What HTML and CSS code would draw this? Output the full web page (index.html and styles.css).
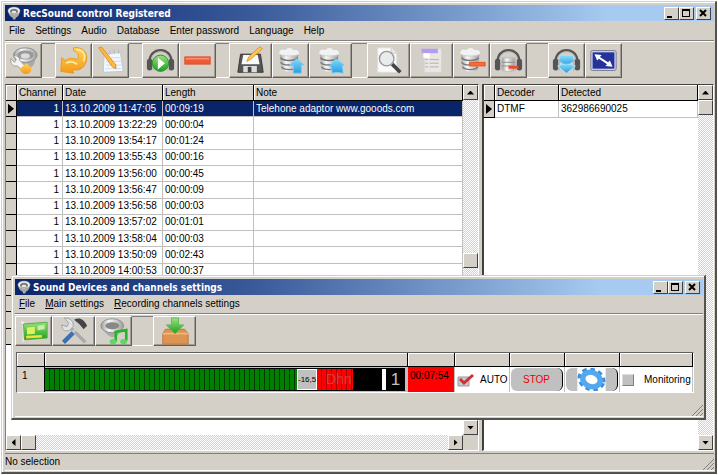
FILE: index.html
```html
<!DOCTYPE html>
<html lang="en">
<head>
    <meta charset="UTF-8">
    <title>RecSound control</title>
    <link rel="stylesheet" href="styles.css">
</head>
<body>
    <svg width="0" height="0" class="defs">
        <defs>
            <linearGradient id="silver" x1="0" y1="0" x2="1" y2="0">
                <stop offset="0" stop-color="#9b9b9b"/>
                <stop offset=".35" stop-color="#f8f8f8"/>
                <stop offset="1" stop-color="#9e9e9e"/>
            </linearGradient>
            <linearGradient id="gold" x1="0" y1="0" x2="0" y2="1">
                <stop offset="0" stop-color="#ffd45a"/>
                <stop offset="1" stop-color="#f39a18"/>
            </linearGradient>
            <linearGradient id="leaf" x1="0" y1="0" x2="0" y2="1">
                <stop offset="0" stop-color="#9ae27c"/>
                <stop offset="1" stop-color="#1e9f1e"/>
            </linearGradient>
            <linearGradient id="sky" x1="0" y1="0" x2="0" y2="1">
                <stop offset="0" stop-color="#7fdcfb"/>
                <stop offset="1" stop-color="#2b9ae0"/>
            </linearGradient>
            <symbol id="speaker" viewBox="0 0 32 32">
                <path d="M3 12c0 7 4 12 10 15l1 4h5l1-4c6-3 9-8 9-15z" fill="#aaa"/>
                <ellipse cx="16" cy="11" rx="14" ry="9" fill="#f0f0f0" stroke="#888"/>
                <ellipse cx="16" cy="12" rx="9" ry="6" fill="#7a7a7a"/>
                <ellipse cx="16" cy="14" rx="5" ry="3" fill="#e8e8e8"/>
            </symbol>
            <symbol id="base" viewBox="0 0 32 32">
                <path d="M4 7l2 18c1 4 16 4 17 0l2-18z" fill="url(#silver)"/>
                <path d="M5 13c3 4 16 4 19 0M5 18c3 4 15 4 18 0M6 23c3 4 14 4 17 0" fill="none" stroke="#777" stroke-width="1.5"/>
                <path d="M3 8c0-4 4-6 7-4 3-3 7-3 9 0 4-1 7 1 7 4-1 4-22 4-23 0z" fill="#f2f2f2" stroke="#ccc"/>
            </symbol>
            <symbol id="phones" viewBox="0 0 32 32">
                <path d="M4 18C3 0 29 0 28 18" fill="none" stroke="#555" stroke-width="2.5"/>
                <path d="M6 16C6 3 26 3 26 16" fill="none" stroke="#aaa"/>
                <rect x="1" y="14" width="6" height="13" rx="3" fill="#555"/>
                <rect x="25" y="14" width="6" height="13" rx="3" fill="#555"/>
                <path d="M8 15v12M24 15v12" stroke="#bbb" stroke-width="2"/>
            </symbol>
        </defs>
    </svg>

    <div class="window main">
        <div class="titlebar">
            <svg class="logo"><use href="#speaker"/></svg>
            <span class="caption">RecSound control Registered</span>
            <button class="sys" aria-label="Minimize"><i class="min"></i></button>
            <button class="sys" aria-label="Maximize"><i class="max"></i></button>
            <button class="sys close" aria-label="Close"><svg viewBox="0 0 8 8"><path d="M1 1l6 6M7 1L1 7"/></svg></button>
        </div>
        <div class="menu">
            <button>File</button>
            <button>Settings</button>
            <button>Audio</button>
            <button>Database</button>
            <button>Enter password</button>
            <button>Language</button>
            <button>Help</button>
        </div>
        <div class="toolbar">
            <button class="tool" aria-label="Sound devices">
                <svg viewBox="0 0 32 32"><path d="M6 12c1 8 7 14 13 15 6-2 10-7 10-14z" fill="#aaa"/><ellipse cx="18" cy="10" rx="13" ry="8" fill="url(#silver)" stroke="#888"/><ellipse cx="18" cy="10" rx="9" ry="5" fill="#999"/><ellipse cx="18" cy="11" rx="5" ry="3" fill="#ddd"/><path d="M2 14c-1 6 3 9 7 8l5 4 4-4-6-6c0-4-4-6-7-5l3 4-2 3z" fill="#f2f2f2" stroke="#999"/><path d="M12 25l7-6 5 4c2 4-1 8-5 8-4 0-6-3-7-6z" fill="url(#gold)"/></svg>
            </button>
            <span class="sep"></span>
            <button class="tool" aria-label="Refresh">
                <svg viewBox="0 0 32 32"><path d="M16 2c10-2 17 6 14 15-2 8-9 11-15 9l1 4-14-2 1-15 4 3c6-4 10-2 13-1 3-4 1-8-4-10z" fill="url(#gold)" stroke="#eb961a"/><path d="M19 4c8 0 11 6 8 13M8 19c4-3 9-1 12 1" fill="none" stroke="#ffe9a0" stroke-width="2"/></svg>
            </button>
            <button class="tool" aria-label="Notes">
                <svg viewBox="0 0 32 32"><path d="M9 9l18-2 3 21-22 1z" fill="#f4f8fb" stroke="#b4c8d8"/><path d="M11 13h16M11 17h17M11 21h17M10 25h18" stroke="#c5dcec"/><path d="M15 5v5M20 4v5M25 4v5" stroke="#bbb"/><path d="M3 2l3-1 16 20v4l-4-2z" fill="#ffb93e" stroke="#d98d20"/></svg>
            </button>
            <span class="sep"></span>
            <button class="tool" aria-label="Listen">
                <svg viewBox="0 0 32 32"><use href="#phones"/><circle cx="16" cy="19" r="9" fill="url(#leaf)" stroke="#239023"/><path d="M13 13l8 6-8 7z" fill="#fff"/></svg>
            </button>
            <button class="tool" aria-label="Remove">
                <svg viewBox="0 0 32 32"><rect x="2" y="12" width="28" height="8" fill="#ee5a35" stroke="#d8502c"/><path d="M3 14h26" stroke="#ff8b6c" stroke-width="2"/></svg>
            </button>
            <span class="sep"></span>
            <button class="tool wide" aria-label="Save">
                <svg viewBox="0 0 32 32"><path d="M5 9h22l3 20H2z" fill="#555" stroke="#333"/><path d="M8 10h16l2 10H6z" fill="#fafafa"/><rect x="8" y="22" width="15" height="7" fill="#ddd"/><rect x="13" y="23" width="4" height="6" fill="#444"/><path d="M12 17l2-5L26 1l3 2-12 11z" fill="#ffc84c" stroke="#d8922c"/></svg>
            </button>
            <button class="tool" aria-label="Export database">
                <svg viewBox="0 0 32 32"><use href="#base"/><path d="M23 14l8 7h-3v9h-9v-9h-4z" fill="url(#sky)" stroke="#7cd0f2"/></svg>
            </button>
            <button class="tool wide" aria-label="Import database">
                <svg viewBox="0 0 32 32"><use href="#base"/><path d="M22 14l9 7-2 1 1 8-7-1-5 1-1-6-2-2z" fill="url(#sky)" stroke="#7cd0f2"/></svg>
            </button>
            <span class="sep mid"></span>
            <button class="tool wide" aria-label="Search">
                <svg viewBox="0 0 32 32"><path d="M4 2h15l6 6v21H4z" fill="#fafafa" stroke="#ddd"/><path d="M19 2v6h6" fill="#e8e8e8" stroke="#ccc"/><path d="M20 20l9 9" stroke="#444" stroke-width="4"/><circle cx="14" cy="14" r="8" fill="#e4e8ea" fill-opacity=".8" stroke="#999" stroke-width="1.5"/></svg>
            </button>
            <button class="tool wide" aria-label="Report">
                <svg viewBox="0 0 32 32"><rect x="8" y="3" width="19" height="26" fill="#e9e7e4" stroke="#d8d5d0"/><path d="M5 3h18v5H5z" fill="#b49cee"/><path d="M7 8h7v5H7z" fill="#fff"/><path d="M9 15h3M14 15h10M9 19h3M14 19h10M9 23h3M14 23h10" stroke="#aaa"/></svg>
            </button>
            <button class="tool" aria-label="Delete from database">
                <svg viewBox="0 0 32 32"><use href="#base"/><rect x="14" y="18" width="17" height="4" fill="#f86a38" stroke="#e9501a"/></svg>
            </button>
            <button class="tool" aria-label="Stop listening">
                <svg viewBox="0 0 32 32"><use href="#phones"/><path d="M9 13h14v13c-2 3-12 3-14 0z" fill="url(#silver)" stroke="#bbb"/><path d="M9 18h14M9 22h14" stroke="#888"/><rect x="16" y="22" width="11" height="3" fill="#ee4a28"/></svg>
            </button>
            <span class="sep far"></span>
            <button class="tool" aria-label="Download audio">
                <svg viewBox="0 0 32 32"><use href="#phones"/><path d="M9 11h14v4h3l-10 7-10-7h3z" fill="url(#sky)"/><path d="M9 20h14v2h3l-10 8-10-8h3z" fill="url(#sky)" stroke="#c9f0ff" stroke-width=".6"/></svg>
            </button>
            <button class="tool" aria-label="Resize">
                <svg viewBox="0 0 32 32"><rect x="2" y="5" width="28" height="22" rx="2" fill="#c9d0ea" stroke="#778"/><rect x="4" y="7" width="24" height="18" fill="#24329a"/><path d="M6 9l8 1-2 2 9 6 2-2 3 7-8-1 2-2-9-6-2 2z" fill="#fff"/></svg>
            </button>
        </div>

        <div class="panes">
            <div class="pane left">
                <div class="view">
                    <table class="grid">
                        <colgroup><col class="c-mark"><col class="c-chan"><col class="c-date"><col class="c-len"><col></colgroup>
                        <thead>
                            <tr><th></th><th>Channel</th><th>Date</th><th>Length</th><th>Note</th></tr>
                        </thead>
                        <tbody>
                            <tr class="selected"><td><i class="mark"></i></td><td>1</td><td>13.10.2009 11:47:05</td><td>00:09:19</td><td>Telehone adaptor www.gooods.com</td></tr>
                            <tr><td></td><td>1</td><td>13.10.2009 13:22:29</td><td>00:00:04</td><td></td></tr>
                            <tr><td></td><td>1</td><td>13.10.2009 13:54:17</td><td>00:01:24</td><td></td></tr>
                            <tr><td></td><td>1</td><td>13.10.2009 13:55:43</td><td>00:00:16</td><td></td></tr>
                            <tr><td></td><td>1</td><td>13.10.2009 13:56:00</td><td>00:00:45</td><td></td></tr>
                            <tr><td></td><td>1</td><td>13.10.2009 13:56:47</td><td>00:00:09</td><td></td></tr>
                            <tr><td></td><td>1</td><td>13.10.2009 13:56:58</td><td>00:00:03</td><td></td></tr>
                            <tr><td></td><td>1</td><td>13.10.2009 13:57:02</td><td>00:01:01</td><td></td></tr>
                            <tr><td></td><td>1</td><td>13.10.2009 13:58:04</td><td>00:00:03</td><td></td></tr>
                            <tr><td></td><td>1</td><td>13.10.2009 13:50:09</td><td>00:02:43</td><td></td></tr>
                            <tr><td></td><td>1</td><td>13.10.2009 14:00:53</td><td>00:00:37</td><td></td></tr>
                            <tr><td></td><td></td><td></td><td></td><td></td></tr>
                            <tr><td></td><td></td><td></td><td></td><td></td></tr>
                            <tr><td></td><td></td><td></td><td></td><td></td></tr>
                            <tr><td></td><td></td><td></td><td></td><td></td></tr>
                        </tbody>
                    </table>
                    <div class="vscroll">
                        <button class="arrow" aria-label="Scroll up"><i class="up"></i></button>
                        <span class="track"></span>
                        <span class="thumb"></span>
                        <span class="track"></span>
                        <button class="arrow" aria-label="Scroll down"><i class="down"></i></button>
                    </div>
                </div>
                <div class="hscroll">
                    <button class="arrow" aria-label="Scroll left"><i class="back"></i></button>
                    <span class="thumb"></span>
                    <span class="track"></span>
                    <button class="arrow" aria-label="Scroll right"><i class="forth"></i></button>
                    <span class="corner"></span>
                </div>
            </div>
            <div class="pane right">
                <div class="view">
                    <table class="grid codes">
                        <colgroup><col class="c-mark"><col class="c-code"><col></colgroup>
                        <thead>
                            <tr><th></th><th>Decoder</th><th>Detected</th></tr>
                        </thead>
                        <tbody>
                            <tr><td><i class="mark"></i></td><td>DTMF</td><td>362986690025</td></tr>
                        </tbody>
                    </table>
                    <div class="vscroll">
                        <button class="arrow" aria-label="Scroll up"><i class="up"></i></button>
                        <span class="thumb"></span>
                        <span class="track"></span>
                        <button class="arrow" aria-label="Scroll down"><i class="down"></i></button>
                    </div>
                </div>
            </div>
        </div>
        <div class="status">No selection <svg class="grip" viewBox="0 0 12 12"><path d="M1 12L12 1M5 12l7-7M9 12l3-3"/></svg></div>
    </div>

    <div class="window child">
        <div class="titlebar">
            <svg class="logo"><use href="#speaker"/></svg>
            <span class="caption">Sound Devices and channels settings</span>
            <button class="sys" aria-label="Minimize"><i class="min"></i></button>
            <button class="sys" aria-label="Maximize"><i class="max"></i></button>
            <button class="sys close" aria-label="Close"><svg viewBox="0 0 8 8"><path d="M1 1l6 6M7 1L1 7"/></svg></button>
        </div>
        <div class="menu">
            <button><u>F</u>ile</button>
            <button><u>M</u>ain settings</button>
            <button><u>R</u>ecording channels settings</button>
        </div>
        <div class="toolbar">
            <button class="tool" aria-label="Sound card">
                <svg viewBox="0 0 32 32"><path d="M1 6h3v22" fill="none" stroke="#eee" stroke-width="2"/><path d="M4 8l27-2v18l-26 2z" fill="url(#leaf)" stroke="#4aaa3a"/><path d="M8 12l9-1v8l-9 1z" fill="#dff25a"/><path d="M20 10l8-1v5l-8 1z" fill="#c9f0a0"/><path d="M7 23l18-1" stroke="#f0e040" stroke-width="3"/></svg>
            </button>
            <button class="tool wide" aria-label="Tools">
                <svg viewBox="0 0 32 32"><path d="M13 13l16 16" stroke="#aaa" stroke-width="4"/><path d="M5 1l5 6-2 4-6-2c0 7 5 8 9 6l4-4c1-6-3-10-10-10z" fill="#e0e4e8" stroke="#999"/><path d="M24 8L13 19" stroke="#ccc" stroke-width="3"/><path d="M15 18L4 29" stroke="#3d6fb4" stroke-width="5"/><path d="M16 3c6-3 11-1 15 7l-4 4-5-6z" fill="#444"/></svg>
            </button>
            <button class="tool" aria-label="Audio source">
                <svg viewBox="0 0 32 32"><path d="M4 13c2 7 8 10 11 10s8-3 9-9z" fill="#aaa"/><ellipse cx="14" cy="10" rx="13" ry="8" fill="url(#silver)" stroke="#888"/><ellipse cx="14" cy="10" rx="8" ry="4" fill="#888"/><path d="M18 28V17l12-2v12" fill="none" stroke="#28b428" stroke-width="3"/><ellipse cx="15" cy="28" rx="4" ry="3" fill="#5fd85f"/><ellipse cx="27" cy="28" rx="4" ry="3" fill="#5fd85f"/></svg>
            </button>
            <span class="sep far"></span>
            <button class="tool wide" aria-label="Install">
                <svg viewBox="0 0 32 32"><path d="M5 14h22l4 5v12H2V19z" fill="#dc9450" stroke="#b8743c"/><path d="M2 19h29" stroke="#f0b880" stroke-width="2"/><path d="M12 1h8v8h6L16 19 6 9h6z" fill="url(#leaf)" stroke="#5b5"/></svg>
            </button>
        </div>
        <table class="channels">
            <colgroup><col class="k-num"><col><col class="k-time"><col class="k-box"><col class="k-box"><col class="k-box"><col class="k-mon"></colgroup>
            <thead>
                <tr><th></th><th></th><th></th><th></th><th></th><th></th><th></th></tr>
            </thead>
            <tbody>
                <tr>
                    <td class="num">1</td>
                    <td class="meter">
                        <div class="level">
                            <span class="green"></span>
                            <span class="knob">-16,5</span>
                            <span class="red">Dhn</span>
                            <span class="black"></span>
                            <span class="white"></span>
                            <span class="chan">1</span>
                        </div>
                    </td>
                    <td class="time">00:07:54</td>
                    <td><label class="check"><input type="checkbox" class="auto" checked><svg viewBox="0 0 18 14"><path d="M1 4h11v9H1z" fill="#c4c8d0" stroke="#999"/><path d="M3 6l4 4 9-8" fill="none" stroke="#d23030" stroke-width="3"/></svg>AUTO</label></td>
                    <td><button class="pill stop">STOP</button></td>
                    <td><button class="pill gear" aria-label="Channel settings">
                        <svg viewBox="0 0 32 26"><rect width="32" height="26" fill="#fff"/><g transform="rotate(18 16 13)"><ellipse cx="16" cy="13" rx="14" ry="11" fill="none" stroke="#3a8edc" stroke-width="4" stroke-dasharray="5 4"/><ellipse cx="16" cy="13" rx="10" ry="8" fill="#fff" stroke="#53a9f0" stroke-width="6"/></g></svg>
                    </button></td>
                    <td><label class="check mon"><input type="checkbox">Monitoring</label></td>
                </tr>
            </tbody>
        </table>
        <div class="foot"><svg class="grip" viewBox="0 0 12 12"><path d="M1 12L12 1M5 12l7-7M9 12l3-3"/></svg></div>
    </div>
</body>
</html>
```
FILE: styles.css
```css
*{
    box-sizing: border-box;
}
body{
    margin: 0;
    padding: 1px;
    background: #fff;
    font-family: "Liberation Sans", Arial, sans-serif;
    font-size: 10px;
    line-height: 14px;
    color: #000;
}
button{
    margin: 0;
    padding: 0;
    border: 0;
    background: none;
    font: inherit;
    color: inherit;
}
.defs{
    position: absolute;
}

/* windows */
.window{
    display: flex;
    flex-direction: column;
    background: #d4d0c8;
    border: 1px solid #d4d0c8;
    border-right: 2px solid #55524c;
    border-bottom: 2px solid #55524c;
    box-shadow: inset 1px 1px #fff;
    padding: 3px 1px 1px 3px;
}
.main{
    min-height: calc(100vh - 2px);
}
.child{
    position: absolute;
    left: 11px;
    right: 12px;
    top: 275px;
}
.titlebar{
    display: flex;
    align-items: center;
    height: 16px;
    padding-right: 3px;
    background: linear-gradient(to right, #0a246a, #3a5a9a 35%, #a6caf0 85%);
}
.logo{
    width: 16px;
    height: 14px;
    margin: 0 1px;
}
.caption{
    flex: 1;
    font: bold 10px "DejaVu Sans Condensed", "DejaVu Sans", sans-serif;
    color: #fff;
}
.sys{
    display: flex;
    width: 15px;
    height: 13px;
    padding: 1px 2px;
    background: #d4d0c8;
    border: 1px solid;
    border-color: #fff #404040 #404040 #fff;
}
.close{
    margin-left: 2px;
}
.sys svg{
    width: 8px;
    height: 8px;
    stroke: #000;
    stroke-width: 2;
}
.min{
    width: 5px;
    height: 2px;
    margin-top: 7px;
    background: #000;
}
.max{
    width: 8px;
    height: 8px;
    border: 1px solid #000;
    border-top-width: 2px;
}
.menu{
    display: flex;
    gap: 10px;
    height: 20px;
    padding: 0 4px;
    border-bottom: 1px solid #808080;
    box-shadow: 0 1px #fff;
}
.toolbar{
    display: flex;
    height: 40px;
    padding: 2px 0 3px;
}
.tool{
    display: flex;
    align-items: center;
    justify-content: center;
    width: 37px;
    border: 1px solid;
    border-color: #fff #606060 #606060 #fff;
    box-shadow: inset -1px -1px #a09c94;
}
.tool.wide{
    width: 43px;
}
.tool svg{
    width: 29px;
    height: 29px;
}
.sep{
    width: 13px;
    border-top: 1px solid #808080;
    border-bottom: 1px solid #fff;
}
.sep.mid{
    width: 15px;
}
.sep.far{
    width: 21px;
}

/* panes */
.panes{
    flex: 1;
    display: flex;
    gap: 3px;
    margin-top: 3px;
}
.pane{
    display: flex;
    flex-direction: column;
    background: #fff;
    border: 1px solid;
    border-color: #404040 #fff #fff #808080;
}
.left{
    flex: 1;
}
.right{
    flex: 0 0 232px;
    border-left: 2px solid #404040;
}
.view{
    flex: 1;
    display: flex;
    align-items: flex-start;
}
.grid{
    flex: 1;
    width: 100%;
    height: 260px;
    table-layout: fixed;
    border-collapse: separate;
    border-spacing: 0;
    white-space: nowrap;
}
.grid.codes{
    height: 33px;
}
.c-mark{
    width: 11px;
}
.c-chan{
    width: 46px;
}
.c-date{
    width: 100px;
}
.c-len{
    width: 91px;
}
.c-code{
    width: 64px;
}
.grid th,
.grid td{
    height: 16px;
    padding: 0 0 0 2px;
    line-height: 14px;
    font-weight: normal;
    text-align: left;
    overflow: hidden;
}
.grid th{
    background: #d4d0c8;
    border-right: 1px solid #000;
    border-bottom: 1px solid #000;
    box-shadow: inset 1px 1px #fff;
}
.grid td{
    border-right: 1px solid #c0c0c0;
    border-bottom: 1px solid #c0c0c0;
}
.grid td:first-child{
    padding: 0;
    background: #d4d0c8;
    border-right: 1px solid #000;
    border-bottom: 1px solid #000;
}
.left td:nth-child(2){
    padding-right: 3px;
    text-align: right;
}
.grid .selected td:not(:first-child){
    background: #0a246a;
    color: #fff;
}
.mark{
    display: block;
    width: 6px;
    height: 10px;
    margin-left: 2px;
    background: #000;
    clip-path: polygon(0 0, 100% 50%, 0 100%);
}

/* scroll bars */
.vscroll{
    align-self: stretch;
    flex: none;
    display: flex;
    flex-direction: column;
    width: 15px;
}
.hscroll{
    display: flex;
    height: 15px;
}
.track{
    flex: 1;
    background: repeating-conic-gradient(#fff 0 25%, #d4d0c8 0 50%) 0 0 / 2px 2px;
}
.arrow,
.thumb{
    flex: none;
    display: flex;
    align-items: center;
    justify-content: center;
    width: 15px;
    height: 15px;
    background: #d4d0c8;
    border: 1px solid;
    border-color: #fff #404040 #404040 #fff;
}
.arrow i{
    width: 7px;
    height: 4px;
    background: #000;
}
.up{
    clip-path: polygon(50% 0, 100% 100%, 0 100%);
}
.down{
    clip-path: polygon(0 0, 100% 0, 50% 100%);
}
.arrow .back,
.arrow .forth{
    width: 4px;
    height: 7px;
}
.back{
    clip-path: polygon(100% 0, 100% 100%, 0 50%);
}
.forth{
    clip-path: polygon(0 0, 100% 50%, 0 100%);
}
.corner{
    width: 15px;
    background: #d4d0c8;
}
.status{
    display: flex;
    justify-content: space-between;
    height: 18px;
    margin-top: 2px;
    padding-top: 1px;
    border-top: 1px solid #808080;
    border-bottom: 1px solid #fff;
}
.grip{
    align-self: flex-end;
    width: 12px;
    height: 12px;
    stroke: #808080;
    fill: none;
}

/* channel settings */
.child .menu{
    height: 19px;
}
.child .toolbar{
    height: 35px;
}
.child .tool svg{
    width: 28px;
    height: 28px;
}
.channels{
    width: calc(100% - 10px);
    margin: 3px 0 0 1px;
    table-layout: fixed;
    border-collapse: separate;
    border-spacing: 0;
    background: #fff;
    border: 1px solid;
    border-color: #606060 #fff #fff #606060;
}
.k-num{
    width: 28px;
}
.k-time{
    width: 47px;
}
.k-box{
    width: 55px;
}
.k-mon{
    width: 73px;
}
.channels th{
    height: 14px;
    padding: 0;
    background: #d4d0c8;
    border-right: 1px solid #000;
    border-bottom: 1px solid #000;
    box-shadow: inset 1px 1px #fff;
}
.channels td{
    height: 25px;
    padding: 0;
    border-right: 1px solid #c0c0c0;
}
.channels .num{
    padding: 2px 5px;
    background: #d4d0c8;
    border-right: 1px solid #000;
    vertical-align: top;
}
.channels .meter{
    padding: 1px 2px 1px 0;
    background: #c0c0c0;
}
.level{
    display: flex;
    height: 23px;
    background: #000;
}
.green{
    flex: 1;
    margin: 1px 0;
    background: repeating-linear-gradient(to right, #008000 0 4px, #003800 4px 5px);
}
.knob{
    width: 20px;
    margin: 1px 0;
    background: #c0c0c0;
    border: 1px solid #fff;
    font-size: 8px;
    line-height: 19px;
    text-align: center;
}
.red{
    width: 36px;
    margin: 1px 0;
    padding-left: 9px;
    background: repeating-linear-gradient(to right, #f00 0 4px, #a00 4px 5px);
    font-size: 14px;
    line-height: 21px;
    color: #d04040;
}
.black{
    width: 29px;
}
.white{
    width: 4px;
    margin: 1px 0;
    background: #fff;
}
.chan{
    width: 19px;
    font-size: 17px;
    line-height: 23px;
    text-align: center;
    color: #c0c0c0;
}
.channels .time{
    padding: 2px;
    background: #f00;
    vertical-align: top;
}
.check{
    display: flex;
    align-items: center;
    gap: 5px;
    padding-left: 2px;
}
.check svg{
    flex: none;
    width: 18px;
    height: 14px;
}
.check input{
    appearance: none;
    flex: none;
    width: 12px;
    height: 12px;
    margin: 0;
    background: #c0c0c0;
    border: 1px solid;
    border-color: #ddd #808080 #808080 #ddd;
}
.check .auto{
    position: absolute;
    opacity: 0;
}
.check.mon{
    gap: 10px;
}
.pill{
    display: flex;
    align-items: center;
    justify-content: center;
    width: 52px;
    height: 23px;
    margin: 0 auto;
    background: #c0c0c0;
    border-right: 1px solid #000;
    border-radius: 6px;
}
.stop{
    color: #e00;
}
.pill svg{
    width: 29px;
    height: 23px;
}
.foot{
    display: flex;
    justify-content: flex-end;
    height: 24px;
    border-bottom: 1px solid #fff;
}
```
